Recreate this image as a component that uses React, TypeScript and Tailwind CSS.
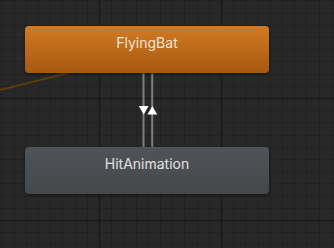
import React from 'react'

const STEP = 12.2
const minorX = Array.from({ length: 30 }, (_, i) => 1.4 + STEP * i).filter(x => x < 334)
const minorY = Array.from({ length: 22 }, (_, i) => 0.4 + STEP * i).filter(y => y < 248)

function GridBackground() {
  return (
    <svg className="absolute inset-0" width={334} height={248}>
      {minorX.map((x, i) => (
        <line
          key={'x' + i}
          x1={Math.round(x) + 0.5}
          x2={Math.round(x) + 0.5}
          y1={0}
          y2={248}
          stroke={i % 10 === 8 ? '#1b1b1b' : '#222222'}
          strokeWidth={i % 10 === 8 ? 1.6 : 1}
        />
      ))}
      {minorY.map((y, i) => (
        <line
          key={'y' + i}
          y1={Math.round(y) + 0.5}
          y2={Math.round(y) + 0.5}
          x1={0}
          x2={334}
          stroke={i % 10 === 8 ? '#1b1b1b' : '#222222'}
          strokeWidth={i % 10 === 8 ? 1.6 : 1}
        />
      ))}
    </svg>
  )
}

function Transitions() {
  return (
    <svg className="absolute inset-0" width={334} height={248}>
      {/* incoming transition from the left */}
      <line x1={-2} y1={90.5} x2={80} y2={70} stroke="#5c3b0c" strokeWidth={2} />
      {/* FlyingBat <-> HitAnimation */}
      <rect x={142.5} y={73} width={2} height={74} fill="#7e7e7e" />
      <rect x={151.2} y={73} width={2} height={74} fill="#7e7e7e" />
      <polygon points="138.8,106 148.6,106 143.7,114.5" fill="#ffffff" />
      <polygon points="147.4,114.5 157.2,114.5 152.3,106" fill="#ffffff" />
    </svg>
  )
}

export default function App() {
  return (
    <div className="relative w-[334px] h-[248px] overflow-hidden bg-[#282828] font-['Inter',sans-serif]">
      <GridBackground />
      <Transitions />

      <div className="absolute left-[25px] top-[26px] w-[244px] h-[47px] rounded-[4px] bg-gradient-to-b from-[#d27b24] to-[#a6580f] shadow-[0_1px_3px_rgba(0,0,0,0.5)] flex justify-center pt-[7px]">
        <span className="text-[14px] leading-[20px] text-[#f1e4d6]">FlyingBat</span>
      </div>

      <div className="absolute left-[25px] top-[147px] w-[244px] h-[47px] rounded-[4px] bg-gradient-to-b from-[#505357] to-[#45484b] shadow-[0_1px_3px_rgba(0,0,0,0.5)] flex justify-center pt-[7px]">
        <span className="text-[14px] leading-[20px] text-[#e2e2e2]">HitAnimation</span>
      </div>
    </div>
  )
}
